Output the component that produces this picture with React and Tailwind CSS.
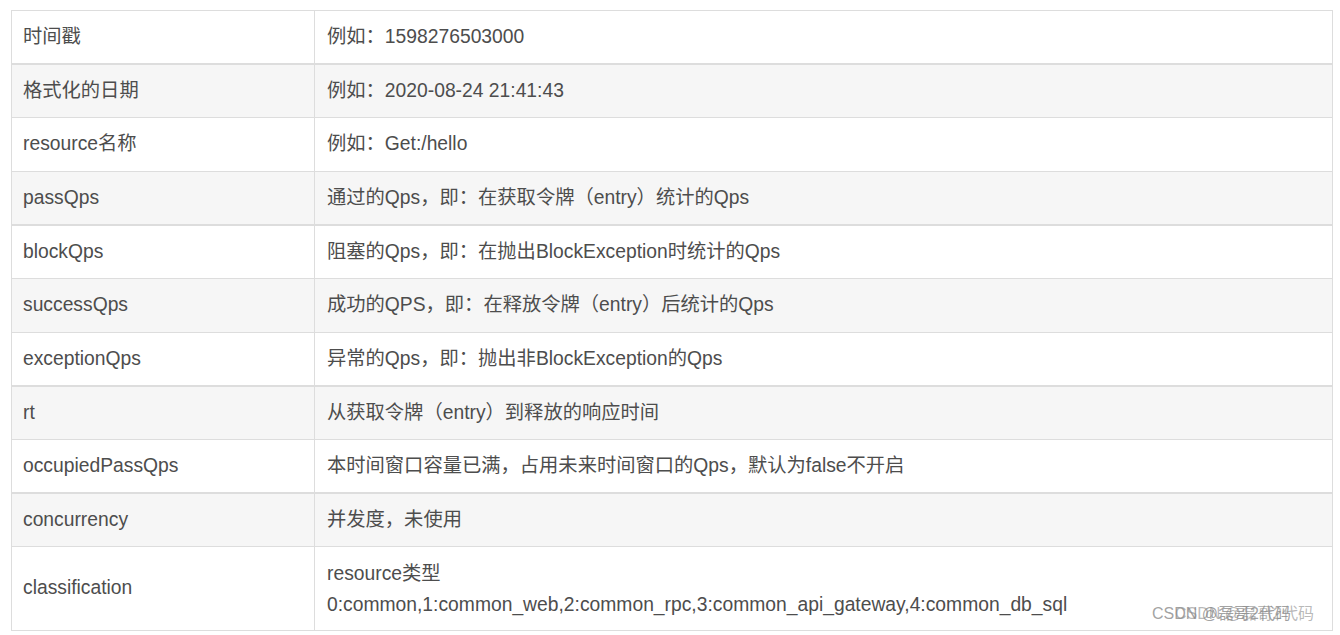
const ROWS = [
  { key: '时间戳', value: '例如：1598276503000', h: 'h-[54px]', thick: true },
  { key: '格式化的日期', value: '例如：2020-08-24 21:41:43', h: 'h-[53px]' },
  { key: 'resource名称', value: '例如：Get:/hello', h: 'h-[54px]' },
  { key: 'passQps', value: '通过的Qps，即：在获取令牌（entry）统计的Qps', h: 'h-[54px]', thick: true },
  { key: 'blockQps', value: '阻塞的Qps，即：在抛出BlockException时统计的Qps', h: 'h-[53px]' },
  { key: 'successQps', value: '成功的QPS，即：在释放令牌（entry）后统计的Qps', h: 'h-[54px]' },
  { key: 'exceptionQps', value: '异常的Qps，即：抛出非BlockException的Qps', h: 'h-[54px]', thick: true },
  { key: 'rt', value: '从获取令牌（entry）到释放的响应时间', h: 'h-[53px]' },
  { key: 'occupiedPassQps', value: '本时间窗口容量已满，占用未来时间窗口的Qps，默认为false不开启', h: 'h-[54px]', thick: true },
  { key: 'concurrency', value: '并发度，未使用', h: 'h-[53px]' },
];

const font = "font-['Liberation_Sans','Noto_Sans_CJK_SC',Arial,sans-serif]";

export default function App() {
  return (
    <div className={`w-[1340px] h-[635px] bg-white ${font} text-[19.3px] text-[#4d4d4d] pt-[10px] pl-[11px] relative overflow-hidden`}>
      <div className="w-[1322px] border border-[#dddddd]">
        {ROWS.map((row, i) => (
          <div
            key={row.key}
            className={`flex ${row.h} ${i % 2 === 1 ? 'bg-[#f6f6f6]' : 'bg-white'} ${row.thick ? 'border-b-2' : 'border-b'} border-[#dddddd]`}
          >
            <div className="w-[303px] border-r border-[#dddddd] flex items-center pl-[11px]">{row.key}</div>
            <div className="flex-1 flex items-center pl-[12px]">{row.value}</div>
          </div>
        ))}
        <div className="flex h-[83px] bg-white">
          <div className="w-[303px] border-r border-[#dddddd] flex items-center pl-[11px]">classification</div>
          <div className="flex-1 flex flex-col justify-center pl-[12px] leading-[31px]">
            <span>resource类型</span>
            <span>0:common,1:common_web,2:common_rpc,3:common_api_gateway,4:common_db_sql</span>
          </div>
        </div>
      </div>
      {/* watermark: two copies drawn on top of each other */}
      <div className="absolute left-[1152px] top-[606px] text-[16px] text-[#8a8a8a]/80 whitespace-nowrap leading-none [text-shadow:23px_0_0_rgba(138,138,138,0.6)]">
        CSDN @磊哥2代码
      </div>
    </div>
  );
}
